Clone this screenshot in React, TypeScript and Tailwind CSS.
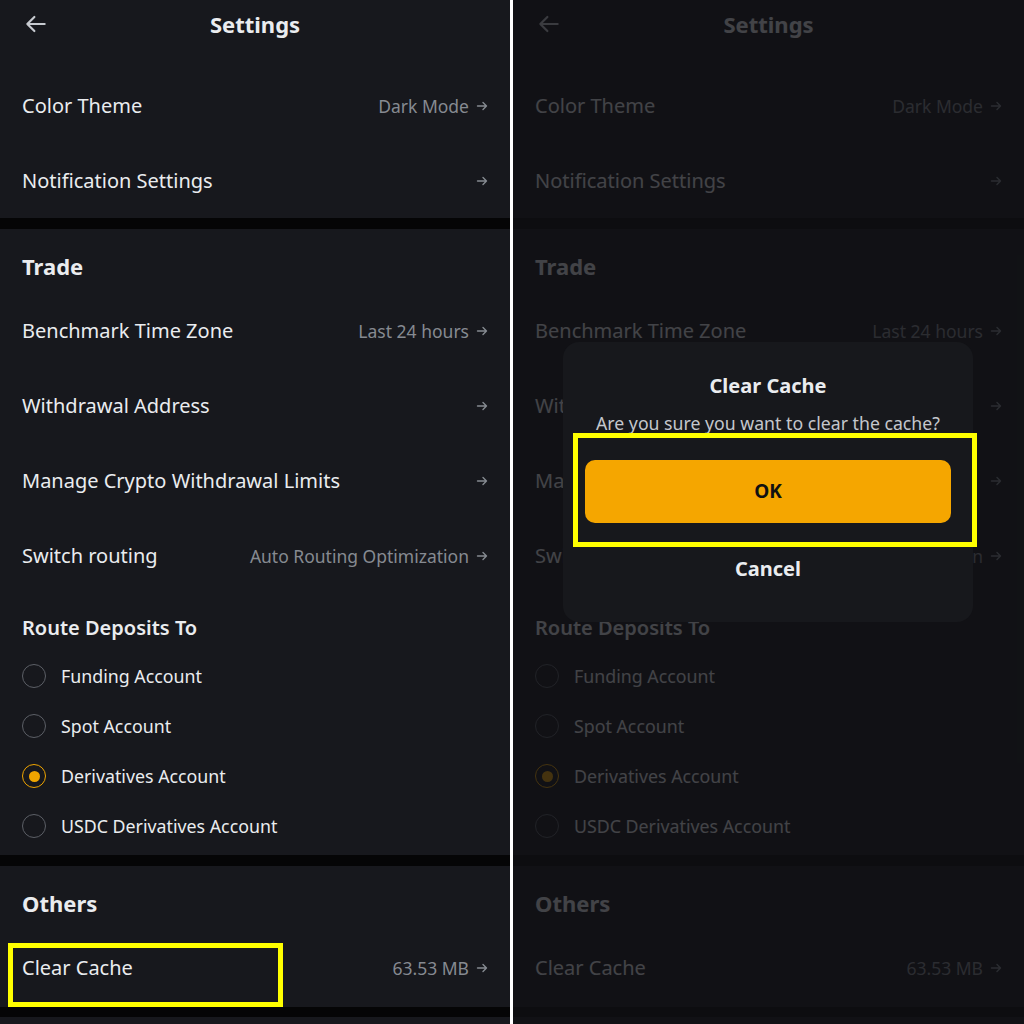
import React from "react";

const FONT = { fontFamily: "'Noto Sans', Roboto, sans-serif" };

const Arrow = () => (
  <svg width="12" height="12" viewBox="0 0 12 12" fill="none" stroke="currentColor" strokeWidth="1.4" strokeLinecap="round" strokeLinejoin="round">
    <path d="M1.5 6h9M7 2.5 10.5 6 7 9.5" />
  </svg>
);

const BackArrow = () => (
  <svg width="26" height="26" viewBox="0 0 24 24" fill="none" stroke="#c7cad0" strokeWidth="2" strokeLinecap="round" strokeLinejoin="round">
    <path d="M20 12H4M10.5 5.5 4 12l6.5 6.5" />
  </svg>
);

const Row = ({ label, value, children }: { label: string; value?: string; children?: React.ReactNode }) => (
  <div className="relative flex h-[75px] items-center justify-between px-[22px]">
    <span className="text-[20px] leading-[24px] text-[#eaecef]">{label}</span>
    <span className="flex items-center gap-[7px] text-[17.5px] leading-[24px] text-[#868a91]">
      {value && <span>{value}</span>}
      <Arrow />
    </span>
    {children}
  </div>
);

const Heading = ({ text }: { text: string }) => (
  <div className="h-[64px] px-[22px] pt-[26px]">
    <span className="block text-[22px] font-bold leading-[22px] text-[#eaecef]">{text}</span>
  </div>
);

const Radio = ({ label, checked }: { label: string; checked?: boolean }) => (
  <div className="flex h-[50px] items-center gap-[15px] px-[22px]">
    <span
      className={
        checked
          ? "flex h-[24px] w-[24px] items-center justify-center rounded-full border-[1.5px] border-[#f0a500]"
          : "flex h-[24px] w-[24px] items-center justify-center rounded-full border-[1.5px] border-[#5c5f66]"
      }
    >
      {checked && <span className="h-[11px] w-[11px] rounded-full bg-[#f0a500]" />}
    </span>
    <span className="text-[17.8px] leading-[24px] text-[#eaecef]">{label}</span>
  </div>
);

const Band = ({ h }: { h: string }) => <div className={`${h} bg-[#050506]`} />;

const SettingsScreen = ({ highlight }: { highlight?: boolean }) => (
  <div className="flex h-[1024px] flex-col bg-[#17181d]" style={FONT}>
    <div className="relative flex h-[48px] items-center justify-center">
      <span className="absolute left-[23px] top-[11px]">
        <BackArrow />
      </span>
      <span className="text-[22px] font-bold leading-[28px] text-[#eaecef]">Settings</span>
    </div>
    <div className="h-[20px]" />
    <Row label="Color Theme" value="Dark Mode" />
    <Row label="Notification Settings" />
    <Band h="h-[11px]" />
    <Heading text="Trade" />
    <Row label="Benchmark Time Zone" value="Last 24 hours" />
    <Row label="Withdrawal Address" />
    <Row label="Manage Crypto Withdrawal Limits" />
    <Row label="Switch routing" value="Auto Routing Optimization" />
    <div className="h-[58px] px-[22px] pt-[23px]">
      <span className="block text-[20px] font-semibold leading-[24px] text-[#eaecef]">Route Deposits To</span>
    </div>
    <Radio label="Funding Account" />
    <Radio label="Spot Account" />
    <Radio label="Derivatives Account" checked />
    <Radio label="USDC Derivatives Account" />
    <div className="h-[4px]" />
    <Band h="h-[11px]" />
    <Heading text="Others" />
    <Row label="Clear Cache" value="63.53 MB">
      {highlight && (
        <div className="absolute left-[8px] top-[13px] h-[64px] w-[275px] border-[5px] border-[#ffff00]" />
      )}
    </Row>
    <div className="h-[2px]" />
    <Band h="h-[10px]" />
    <div className="flex-1" />
  </div>
);

export default function App() {
  return (
    <div className="flex h-[1024px] w-[1024px] overflow-hidden bg-white">
      <div className="w-[510px] shrink-0">
        <SettingsScreen highlight />
      </div>
      <div className="w-[3px] shrink-0 bg-white" />
      <div className="relative w-[511px] shrink-0">
        <SettingsScreen />
        <div className="absolute inset-0 bg-[#0f1013]/[0.77]" />
        <div
          className="absolute left-[50px] top-[342px] flex h-[280px] w-[410px] flex-col items-center rounded-[16px] bg-[#17181c] pt-[32px]"
          style={FONT}
        >
          <span className="text-[20px] font-bold leading-[24px] text-[#eaecef]">Clear Cache</span>
          <span className="mt-[13px] text-[17.7px] leading-[24px] text-[#c4c7cc]">
            Are you sure you want to clear the cache?
          </span>
          <div className="mt-[25px] flex h-[63px] w-[366px] items-center justify-center rounded-[10px] bg-[#f5a600]">
            <span className="text-[19px] font-bold text-[#111]">OK</span>
          </div>
          <span className="mt-[34px] text-[20px] font-bold leading-[24px] text-[#eaecef]">Cancel</span>
          <div className="absolute left-[10px] top-[91px] h-[114px] w-[404px] border-[5px] border-[#ffff00]" />
        </div>
      </div>
    </div>
  );
}
